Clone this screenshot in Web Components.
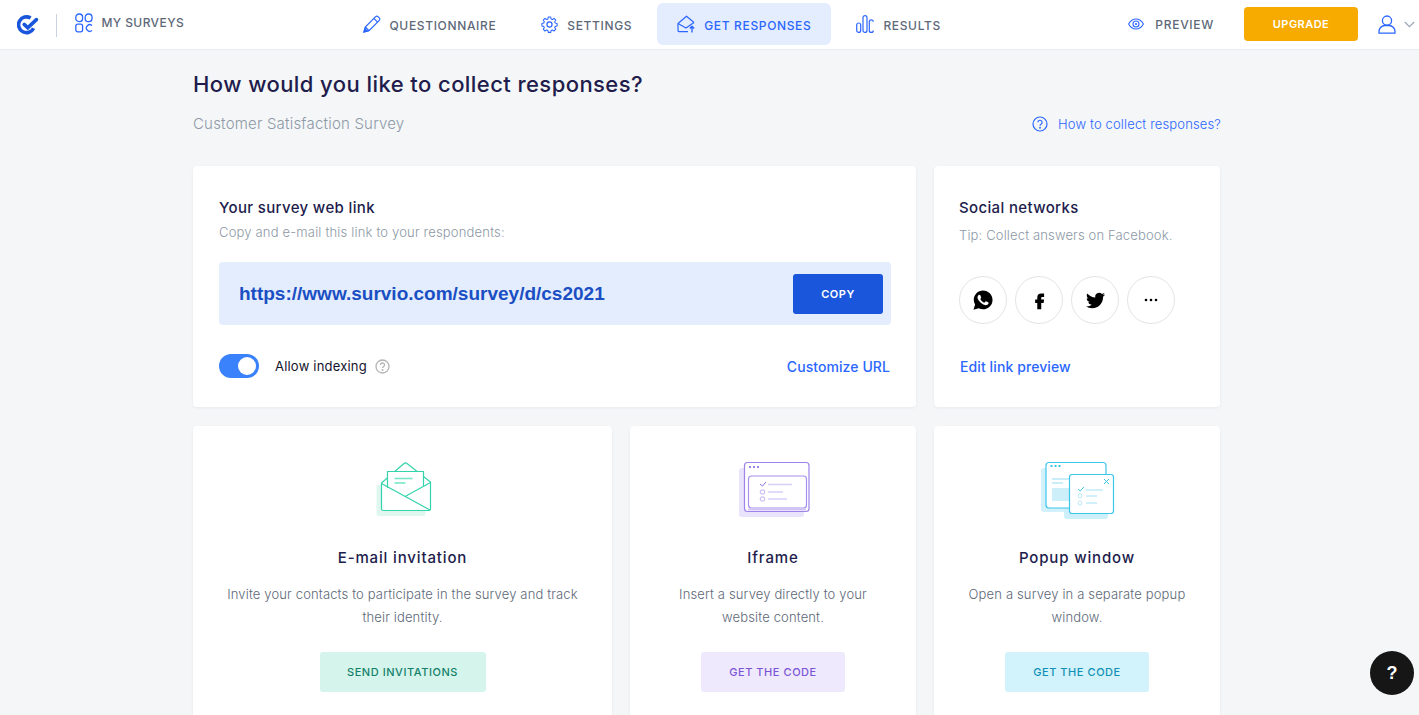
<!DOCTYPE html>
<html lang="en">
<head>
<meta charset="utf-8">
<title>Survio</title>
<style>
  html, body { margin: 0; height: 100%; overflow: hidden; background: #f4f6f8; font-family: Inter, "Liberation Sans", sans-serif; }
</style>
</head>
<body>
<survey-app></survey-app>
<script>
const ICONS = {
  logo: `<svg width="22" height="22" viewBox="0 0 22 22" fill="none" stroke="#1a56db" stroke-width="3.6"><path d="M16.6 14.2A7.9 7.9 0 1 1 13.6 4"/><path d="M7.2 10.4l3.6 3.4 8.6-8.2" stroke-linecap="round"/></svg>`,
  grid: `<svg width="18" height="20" viewBox="0 0 18 20" fill="none" stroke="#2b66ff" stroke-width="1.3"><rect x=".8" y="1" width="6.8" height="7.6" rx="3.2"/><rect x="10.2" y="1" width="6.8" height="7.6" rx="3.2"/><rect x=".8" y="11.2" width="6.8" height="7.6" rx="2"/><path d="M17 12.6a3.3 3.3 0 1 0 0 4.8"/></svg>`,
  pencil: `<svg width="18" height="18" viewBox="0 0 18 18" fill="none" stroke="#2b66ff" stroke-width="1.2"><path d="M1 17l1.3-5L12.6 1.6c.7-.7 1.7-.7 2.4 0l1.3 1.3c.7.7.7 1.7 0 2.4L6 15.6z"/><path d="M10.8 3.4l3.8 3.8M2.3 12l3.7 3.6"/><path d="M1 17l3.4-.9-2.5-2.5z" fill="#2b66ff"/></svg>`,
  gear: `<svg width="17" height="17" viewBox="0 0 24 24" fill="none" stroke="#2b66ff" stroke-width="1.7" stroke-linejoin="round"><circle cx="12" cy="12" r="3.6"/><path d="M10 1.5h4l.6 3.1 2 .9 2.7-1.8 2.8 2.9-1.8 2.6.9 2 3 .7v4l-3 .6-.9 2 1.8 2.6-2.8 2.9-2.7-1.8-2 .9-.6 3h-4l-.6-3-2-.9-2.7 1.8-2.8-2.9 1.8-2.6-.9-2-3-.6v-4l3-.7.9-2-1.8-2.6 2.8-2.9 2.7 1.8 2-.9z" transform="translate(12 12) scale(.88) translate(-12 -13.5)"/></svg>`,
  mail: `<svg width="18" height="18" viewBox="0 0 18 18" fill="none" stroke="#2b66ff" stroke-width="1.2" stroke-linejoin="round"><path d="M11 16.600H2c-.6 0-1-.4-1-1V8.500L9.500 1.200 17 7.500"/><path d="M1 8.500l8 4.600 8-5.600"/><path d="M15 17.400v-6M12.800 13.500l2.200-2.200 2.200 2.200" stroke-width="1.400"/></svg>`,
  bars: `<svg width="18" height="18" viewBox="0 0 18 18" fill="none" stroke="#2b66ff" stroke-width="1.2"><rect x=".7" y="8" width="4" height="9.4" rx="2"/><rect x="7" y=".7" width="4" height="16.7" rx="2"/><path d="M17.3 6.8a2 2 0 0 0-4 0v8.6a2 2 0 0 0 4 0"/></svg>`,
  eye: `<svg width="16" height="12" viewBox="0 0 16 12" fill="none" stroke="#2b66ff" stroke-width="1.1"><path d="M.6 6C2.400 2.700 5 1 8 1s5.600 1.700 7.400 5C13.600 9.300 11 11 8 11S2.400 9.300.6 6z"/><circle cx="8" cy="6" r="3"/><circle cx="8" cy="6" r="1.100" fill="#2b66ff" stroke="none"/></svg>`,
  user: `<svg width="18" height="19" viewBox="0 0 18 19" fill="none" stroke="#2b66ff" stroke-width="1.3"><circle cx="9" cy="5.600" r="4.600"/><path d="M1 18.200v-1.700c0-3.300 2.700-6 6-6h4c3.300 0 6 2.700 6 6v1.700z"/></svg>`,
  chevron: `<svg width="11" height="7" viewBox="0 0 11 7" fill="none" stroke="#9aa7b8" stroke-width="1.200"><path d="M.8 1l4.700 4.700L10.200 1"/></svg>`,
  whatsapp: `<svg width="22" height="22" viewBox="0 0 24 24"><path d="M12.100 1.600C6.400 1.600 1.900 6.200 1.900 11.800c0 1.900.5 3.600 1.500 5.200L1.600 22.600l5.700-1.700c1.500.8 3.100 1.200 4.800 1.200 5.700 0 10.300-4.600 10.300-10.200S17.800 1.600 12.100 1.600z"/><path fill="#fff" d="M17.472 14.382c-.297-.149-1.758-.867-2.03-.967-.273-.099-.471-.148-.67.15-.197.297-.767.966-.94 1.164-.173.199-.347.223-.644.075-.297-.15-1.255-.463-2.39-1.475-.883-.788-1.48-1.761-1.653-2.059-.173-.297-.018-.458.13-.606.134-.133.298-.347.446-.52.149-.174.198-.298.298-.497.099-.198.05-.371-.025-.52-.075-.149-.669-1.612-.916-2.207-.242-.579-.487-.5-.669-.51-.173-.008-.371-.01-.57-.01-.198 0-.52.074-.792.372-.272.297-1.04 1.016-1.04 2.479 0 1.462 1.065 2.875 1.213 3.074.149.198 2.096 3.2 5.077 4.487.709.306 1.262.489 1.694.625.712.227 1.36.195 1.871.118.571-.085 1.758-.719 2.006-1.413.248-.694.248-1.289.173-1.413-.074-.124-.272-.198-.57-.347z"/></svg>`,
  facebook: `<svg width="19" height="19" viewBox="0 0 24 24"><path d="M14.500 7.500h3.300V3h-3.600c-3.400 0-5 2-5 5v2.700H6.500v4.300h2.700V23h5v-8h3l.6-4.300h-3.600V8.500c0-.6.300-1 .8-1z"/></svg>`,
  twitter: `<svg width="19" height="19" viewBox="0 0 24 24"><path d="M23.953 4.57a10 10 0 01-2.825.775 4.958 4.958 0 002.163-2.723c-.951.555-2.005.959-3.127 1.184a4.92 4.92 0 00-8.384 4.482C7.69 8.095 4.067 6.13 1.64 3.162a4.822 4.822 0 00-.666 2.475c0 1.71.87 3.213 2.188 4.096a4.904 4.904 0 01-2.228-.616v.06a4.923 4.923 0 003.946 4.827 4.996 4.996 0 01-2.212.085 4.936 4.936 0 004.604 3.417 9.867 9.867 0 01-6.102 2.105c-.39 0-.779-.023-1.17-.067a13.995 13.995 0 007.557 2.209c9.053 0 13.998-7.496 13.998-13.985 0-.21 0-.42-.015-.63A9.935 9.935 0 0024 4.59z"/></svg>`,
  dots: `<svg width="14" height="4" viewBox="0 0 14 4"><circle cx="2" cy="2" r="1.300"/><circle cx="7" cy="2" r="1.300"/><circle cx="12" cy="2" r="1.300"/></svg>`,
  envelope: `<svg width="90" height="80" viewBox="-2.500 0 90 80" fill="none"><rect x="16" y="35" width="49" height="31" rx="2" fill="#dff7ef"/><g stroke="#35d3ab" stroke-width="1.200"><path d="M21 33L43.500 13.500c1-.8 2-.8 3 0L70 32v27c0 .8-.5 1.500-1.500 1.500H23c-1 0-2-.7-2-1.500z" fill="#fff"/><path d="M27 38V21.500h36V36" fill="#fff"/><path d="M21 33.500L69.500 60M45 46.200L70 32.500"/></g><path d="M34 28.500h18" stroke="#7ae6ca" stroke-width="1.600"/><path d="M34 33h11" stroke="#7ae6ca" stroke-width="1.600"/></svg>`,
  iframe: `<svg width="95" height="80" viewBox="0 0 95 80" fill="none"><rect x="13" y="18" width="65" height="49" rx="3" fill="#e9e3fb"/><rect x="18.500" y="12.500" width="64.500" height="49" rx="3" fill="#fff" stroke="#9e84ea" stroke-width="1.200"/><rect x="22.500" y="26" width="58" height="32" rx="3" stroke="#a78ff0" stroke-width="1.200"/><path d="M22 59.500h58" stroke="#cfc3f6" stroke-width="2"/><g fill="#9e84ea"><rect x="23" y="16" width="2" height="2"/><rect x="27" y="16" width="2" height="2"/><rect x="31" y="16" width="2" height="2"/></g><path d="M34 34l2.500 2 3.500-4" stroke="#8c6fe6"/><g stroke="#d8cff8" stroke-width="1.400"><path d="M42 34.500h24M42 42h15M42 49h19"/></g><g stroke="#cfc3f6" stroke-width="1.200"><circle cx="36.500" cy="42" r="2.200"/><circle cx="36.500" cy="49" r="2.200"/></g></svg>`,
  popup: `<svg width="95" height="80" viewBox="0 0 95 80" fill="none"><rect x="11" y="18" width="50" height="44" rx="3" fill="#d3f1fb"/><rect x="34" y="40" width="44" height="29" rx="3" fill="#cdeffa"/><rect x="16" y="12.500" width="60" height="45.500" rx="3" fill="#fff" stroke="#3cc6ea" stroke-width="1.200"/><g fill="#3cc6ea"><rect x="20.500" y="15" width="2" height="2"/><rect x="24.500" y="15" width="2" height="2"/><rect x="28.500" y="15" width="2" height="2"/></g><path d="M22 29h17M22 33h11" stroke="#b9e9f8" stroke-width="1.400"/><rect x="22" y="38" width="18" height="13" fill="#cdeffa"/><rect x="39.500" y="24.500" width="44" height="39" rx="2.500" fill="#fff" stroke="#3cc6ea" stroke-width="1.200"/><path d="M74 29l5 5M79 29l-5 5" stroke="#3cc6ea"/><path d="M48 39l2.300 2 3.500-4" stroke="#3cc6ea"/><path d="M56 40h17M56 46h11M56 53h11" stroke="#c4ecf9" stroke-width="1.400"/><circle cx="50" cy="46" r="2" stroke="#b9e9f8"/><circle cx="50" cy="53" r="2" stroke="#b9e9f8"/></svg>`
};

class NavItem extends HTMLElement {
  constructor() {
    super();
    this.attachShadow({mode: "open"});
    this.shadowRoot.innerHTML = `
    <style>
      :host { display: flex; align-items: center; gap: 9px; height: 42px; padding: 0 20px; border-radius: 6px; margin-top: 3px;
              color: #5d6878; font: 500 12px Inter, "Liberation Sans", sans-serif; letter-spacing: .65px; white-space: nowrap; }
      :host([active]) { background: #e4edfd; color: #2b66ff; }
      svg { display: block; }
      span { display: flex; }
      .label { padding-top: 2px; }
    </style>
    <span>${ICONS[this.getAttribute("icon")]}</span><div class="label"><slot></slot></div>`;
  }
}

class TopBar extends HTMLElement {
  constructor() {
    super();
    this.attachShadow({mode: "open"});
    this.shadowRoot.innerHTML = `
    <style>
      :host { display: flex; height: 49px; background: #fff; border-bottom: 1px solid #e8ecf1; font: 500 12px Inter, "Liberation Sans", sans-serif; color: #5d6878; letter-spacing: .6px; }
      .left { display: flex; align-items: center; padding: 4px 0 0 17px; width: 326px; box-sizing: border-box; height: 46px; }
      .left .rule { width: 1px; height: 23px; background: #c9d3e0; margin: 0 18px 0 17px; }
      .mine { display: flex; align-items: center; gap: 8.500px; margin-top: -5px; letter-spacing: .4px; }
      nav { display: flex; gap: 5px; margin-left: 16.500px; }
      .right { display: flex; align-items: center; margin-left: auto; height: 48px; padding-right: 4px; }
      .preview { display: flex; align-items: center; gap: 11px; margin-right: 30px; letter-spacing: .7px; }
      button { width: 114px; height: 34px; border: 0; border-radius: 4px; background: #f7ab00; color: #fff; font: 600 11px Inter, "Liberation Sans", sans-serif; letter-spacing: .45px; margin-right: 20px; }
      .user { display: flex; align-items: center; gap: 8px; }
      svg { display: block; }
    </style>
    <div class="left">${ICONS.logo}<div class="rule"></div><div class="mine">${ICONS.grid}MY SURVEYS</div></div>
    <nav>
      <nav-item icon="pencil">QUESTIONNAIRE</nav-item>
      <nav-item icon="gear">SETTINGS</nav-item>
      <nav-item icon="mail" active>GET RESPONSES</nav-item>
      <nav-item icon="bars">RESULTS</nav-item>
    </nav>
    <div class="right">
      <div class="preview">${ICONS.eye}PREVIEW</div>
      <button>UPGRADE</button>
      <div class="user">${ICONS.user}${ICONS.chevron}</div>
    </div>`;
  }
}

class PageHead extends HTMLElement {
  constructor() {
    super();
    this.attachShadow({mode: "open"});
    this.shadowRoot.innerHTML = `
    <style>
      :host { display: block; padding-top: 19px; height: 116px; box-sizing: border-box; font-family: Inter, "Liberation Sans", sans-serif; }
      h1 { margin: 0; font-size: 22px; line-height: 30px; font-weight: 500; color: #211c4b; letter-spacing: .43px; }
      .row { display: flex; justify-content: space-between; align-items: center; margin-top: 14.500px; height: 20px; }
      .sub { font-size: 15px; color: #8d99a6; font-weight: 300; letter-spacing: .2px; }
      .help { display: flex; align-items: center; gap: 10px; color: #2b66ff; font-size: 13px; font-weight: 300; letter-spacing: .15px; }
      svg { display: block; }
    </style>
    <h1><slot></slot></h1>
    <div class="row">
      <div class="sub">${this.getAttribute("sub")}</div>
      <div class="help"><svg width="16" height="16" viewBox="0 0 16 16" fill="none" stroke="#2b66ff" stroke-width="1.200"><circle cx="8" cy="8" r="7"/><path d="M5.900 6.300a2.100 2.100 0 1 1 3.100 1.900c-.7.400-1 .8-1 1.500"/><circle cx="8" cy="11.800" r=".4"/></svg>How to collect responses?</div>
    </div>`;
  }
}

class LinkCard extends HTMLElement {
  constructor() {
    super();
    this.attachShadow({mode: "open"});
    this.shadowRoot.innerHTML = `
    <style>
      :host { display: block; grid-column: span 2; background: #fff; border-radius: 4px; box-shadow: 0 1px 3px rgba(40,60,90,.06); padding: 32px 25px 0 26px; height: 241px; box-sizing: border-box; font-family: Inter, "Liberation Sans", sans-serif; }
      h2 { margin: 0; font-size: 15px; line-height: 20px; font-weight: 500; color: #211c4b; letter-spacing: .35px; }
      p { margin: 5px 0 0; font-size: 13px; line-height: 18px; font-weight: 300; color: #8d99a6; letter-spacing: .18px; }
      .link { display: flex; align-items: center; justify-content: space-between; height: 63px; margin-top: 21px; padding: 0 8px 0 20px; background: #e4edfd; border-radius: 4px; }
      .url { font: bold 19px "Liberation Sans", Arial, sans-serif; color: #1a4fc4; }
      button { width: 90px; height: 40px; border: 0; border-radius: 3px; background: #1a56db; color: #fff; font: 600 11px Inter, "Liberation Sans", sans-serif; letter-spacing: .5px; }
      .foot { display: flex; align-items: center; margin-top: 29px; height: 24px; font-size: 13px; color: #14142b; letter-spacing: .2px; }
      .toggle { width: 40px; height: 24px; border-radius: 12px; background: #3a82fb; position: relative; margin-right: 16px; }
      .toggle::after { content: ""; position: absolute; right: 3px; top: 3px; width: 18px; height: 18px; border-radius: 50%; background: #fff; }
      svg { display: block; margin-left: 8px; }
      a { margin-left: auto; color: #2b66ff; font-size: 14px; font-weight: 500; padding-right: 1px; letter-spacing: .08px; }
    </style>
    <h2>Your survey web link</h2>
    <p>Copy and e-mail this link to your respondents:</p>
    <div class="link"><span class="url">https://www.survio.com/survey/d/cs2021</span><button>COPY</button></div>
    <div class="foot">
      <div class="toggle"></div>Allow indexing
      <svg width="15" height="15" viewBox="0 0 15 15" fill="none" stroke="#b3b3b3" stroke-width="1.300"><circle cx="7.500" cy="7.500" r="6.500"/><path d="M5.500 6a2 2 0 1 1 3 1.700c-.7.400-1 .7-1 1.400"/><circle cx="7.500" cy="11" r=".4"/></svg>
      <a>Customize URL</a>
    </div>`;
  }
}

class SocialCard extends HTMLElement {
  constructor() {
    super();
    this.attachShadow({mode: "open"});
    this.shadowRoot.innerHTML = `
    <style>
      :host { display: block; background: #fff; border-radius: 4px; box-shadow: 0 1px 3px rgba(40,60,90,.06); padding: 32px 25px 0; height: 241px; box-sizing: border-box; font-family: Inter, "Liberation Sans", sans-serif; }
      h2 { margin: 0; font-size: 15px; line-height: 20px; font-weight: 500; color: #211c4b; letter-spacing: .35px; }
      p { margin: 8px 0 0; font-size: 13px; line-height: 18px; font-weight: 300; color: #8d99a6; letter-spacing: .15px; }
      .icons { display: flex; gap: 8px; margin-top: 32px; }
      .icons div { width: 48px; height: 48px; border: 1px solid #e4e4e4; border-radius: 50%; box-sizing: border-box; display: flex; align-items: center; justify-content: center; }
      a { display: block; margin: 34px 0 0 1px; color: #2b66ff; font-size: 14px; font-weight: 500; letter-spacing: .1px; }
    </style>
    <h2>Social networks</h2>
    <p>Tip: Collect answers on Facebook.</p>
    <div class="icons"><div>${ICONS.whatsapp}</div><div>${ICONS.facebook}</div><div>${ICONS.twitter}</div><div>${ICONS.dots}</div></div>
    <a>Edit link preview</a>`;
  }
}

class MethodCard extends HTMLElement {
  constructor() {
    super();
    const bg = this.getAttribute("bg"), fg = this.getAttribute("fg");
    const w = this.getAttribute("btn-width");
    this.attachShadow({mode: "open"});
    this.shadowRoot.innerHTML = `
    <style>
      :host { display: flex; flex-direction: column; align-items: center; background: #fff; border-radius: 4px; box-shadow: 0 1px 3px rgba(40,60,90,.06); height: 320px; padding-top: 24px; box-sizing: border-box; text-align: center; font-family: Inter, "Liberation Sans", sans-serif; }
      .art { height: 80px; }
      svg { display: block; }
      h3 { margin: 18px 0 0; font-size: 15px; line-height: 20px; font-weight: 500; color: #211c4b; letter-spacing: .85px; }
      p { margin: 15px 0 0; width: 100%; padding: 0 30px; box-sizing: border-box; font-size: 13px; line-height: 23px; font-weight: 300; color: #5d6878; letter-spacing: .15px; height: 46px; }
      button { margin-top: 23px; width: ${w}px; height: 40px; border: 0; border-radius: 3px; background: ${bg}; color: ${fg}; font: 500 11px Inter, "Liberation Sans", sans-serif; letter-spacing: .55px; }
    </style>
    <div class="art">${ICONS[this.getAttribute("art")]}</div>
    <h3>${this.getAttribute("heading")}</h3>
    <p><slot></slot></p>
    <button>${this.getAttribute("action")}</button>`;
  }
}

class HelpButton extends HTMLElement {
  constructor() {
    super();
    this.attachShadow({mode: "open"});
    this.shadowRoot.innerHTML = `
    <style>
      :host { position: fixed; left: 1370px; top: 651px; width: 44px; height: 44px; border-radius: 50%; background: #161616; color: #fff; display: flex; align-items: center; justify-content: center; font: bold 18px "Liberation Sans", sans-serif; }
    </style>?`;
  }
}

class SurveyApp extends HTMLElement {
  constructor() {
    super();
    this.attachShadow({mode: "open"});
    this.shadowRoot.innerHTML = `
    <style>
      :host { display: block; height: 715px; overflow: hidden; }
      main { width: 1028px; margin-left: 193px; }
      .grid { display: grid; grid-template-columns: 419px 286px 286px; gap: 19px 18px; }
    </style>
    <top-bar></top-bar>
    <main>
      <page-head sub="Customer Satisfaction Survey">How would you like to collect responses?</page-head>
      <div class="grid">
        <link-card></link-card>
        <social-card></social-card>
        <method-card art="envelope" heading="E-mail invitation" action="SEND INVITATIONS" btn-width="166" bg="#d5f5ec" fg="#14806a">Invite your contacts to participate in the survey and track their identity.</method-card>
        <method-card art="iframe" heading="Iframe" action="GET THE CODE" btn-width="144" bg="#efe9fd" fg="#7c55d6">Insert a survey directly to your website content.</method-card>
        <method-card art="popup" heading="Popup window" action="GET THE CODE" btn-width="144" bg="#d3f3fc" fg="#1190b5">Open a survey in a separate popup window.</method-card>
      </div>
    </main>
    <help-button></help-button>`;
  }
}

customElements.define("nav-item", NavItem);
customElements.define("top-bar", TopBar);
customElements.define("page-head", PageHead);
customElements.define("link-card", LinkCard);
customElements.define("social-card", SocialCard);
customElements.define("method-card", MethodCard);
customElements.define("help-button", HelpButton);
customElements.define("survey-app", SurveyApp);
</script>
</body>
</html>
